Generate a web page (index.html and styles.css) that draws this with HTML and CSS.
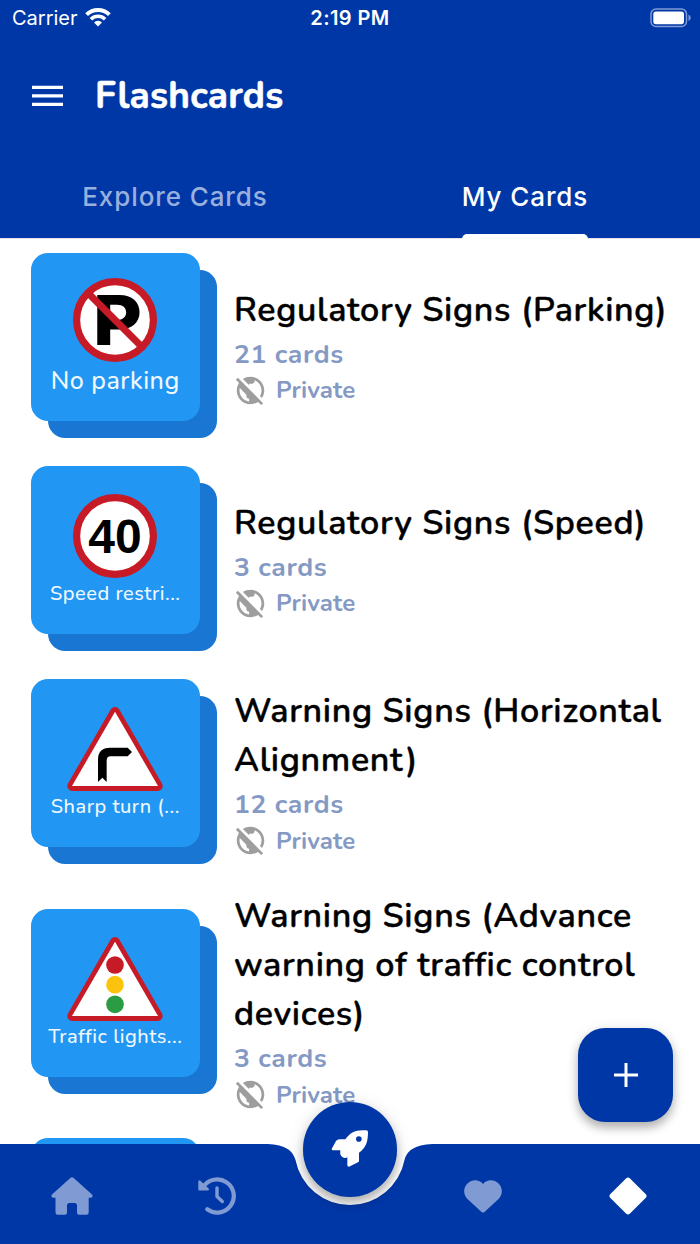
FILE: index.html
```html
<!DOCTYPE html>
<html lang="en">
<head>
  <meta charset="UTF-8" />
  <meta name="viewport" content="width=device-width, initial-scale=1.0" />
  <title>Flashcards</title>
  <link rel="stylesheet" href="styles.css">
</head>
<body>

  <header>
    <div class="status">
      <div class="carrier">
        <span>Carrier</span>
        <svg width="26" height="19" viewBox="0 0 26 19" fill="none" stroke="#fff" stroke-width="4">
          <path d="M1.6 6.7a16.2 16.2 0 0 1 22.8 0" />
          <path d="M5.9 11.2a10 10 0 0 1 14.2 0" stroke-width="3.6" />
          <path d="M13 18.5l-4-4a5.6 5.6 0 0 1 8 0z" fill="#fff" stroke="none" />
        </svg>
      </div>
      <span class="time">2:19 PM</span>
      <svg class="battery" width="42" height="20" viewBox="0 0 42 20">
        <rect x="1" y="1" width="35.5" height="17.4" rx="5" fill="none" stroke="#809bd3" stroke-width="1.5" />
        <rect x="3.3" y="3.4" width="30.7" height="12.8" rx="2.6" fill="#fff" />
        <path d="M38.5 6.5q2.2 1 2.2 3.2t-2.2 3.2z" fill="#809bd3" />
      </svg>
    </div>

    <div class="appbar">
      <svg width="31" height="22" viewBox="0 0 31 22" fill="#fff">
        <path d="M0 .7h31v3.3H0zM0 9.2h31v3.3H0zM0 17.7h31V21H0z" />
      </svg>
      <h1>Flashcards</h1>
    </div>

    <nav class="tabs">
      <div class="tab"><span>Explore Cards</span></div>
      <div class="tab active"><span>My Cards</span></div>
    </nav>
  </header>

  <main>
    <div class="deck">
      <div class="stack">
        <div class="card">
          <svg width="84" height="84" viewBox="0 0 84 84">
            <circle cx="42" cy="42" r="38.4" fill="#fff" stroke="#c61a27" stroke-width="7.2" />
            <text class="sign-p" x="20" y="66.8" textLength="49" lengthAdjust="spacingAndGlyphs">P</text>
            <path d="M16 16l52 52" stroke="#c61a27" stroke-width="7" />
          </svg>
          <span class="label big">No parking</span>
        </div>
      </div>
      <div class="info">
        <h2>Regulatory Signs (Parking)</h2>
        <p class="count">21 cards</p>
        <p class="private"><svg width="33" height="33" viewBox="0 0 24 24"><use href="#public-off" /></svg>Private</p>
      </div>
    </div>

    <div class="deck">
      <div class="stack">
        <div class="card">
          <svg width="84" height="84" viewBox="0 0 84 84">
            <circle cx="42" cy="42" r="38.4" fill="#fff" stroke="#c61a27" stroke-width="7.2" />
            <text class="sign-num" x="42" y="58.5" text-anchor="middle">40</text>
          </svg>
          <span class="label">Speed restri...</span>
        </div>
      </div>
      <div class="info">
        <h2>Regulatory Signs (Speed)</h2>
        <p class="count">3 cards</p>
        <p class="private"><svg width="33" height="33" viewBox="0 0 24 24"><use href="#public-off" /></svg>Private</p>
      </div>
    </div>

    <div class="deck">
      <div class="stack">
        <div class="card">
          <svg width="96" height="84" viewBox="141 110 288 252">
            <path d="M285 125L157 347H413z" fill="#c61a27" stroke="#c61a27" stroke-width="30" stroke-linejoin="round" />
            <path d="M285 124L156 347H414z" fill="#fff" />
            <path d="M234 335V268Q234 232 270 232H323L336 245L323 258H272Q260 258 260 271V335L247 322z" />
          </svg>
          <span class="label">Sharp turn (...</span>
        </div>
      </div>
      <div class="info">
        <h2>Warning Signs (Horizontal<br>Alignment)</h2>
        <p class="count">12 cards</p>
        <p class="private"><svg width="33" height="33" viewBox="0 0 24 24"><use href="#public-off" /></svg>Private</p>
      </div>
    </div>

    <div class="deck">
      <div class="stack">
        <div class="card">
          <svg width="96" height="84" viewBox="141 110 288 252">
            <path d="M285 125L157 347H413z" fill="#c61a27" stroke="#c61a27" stroke-width="30" stroke-linejoin="round" />
            <path d="M285 124L156 347H414z" fill="#fff" />
            <circle cx="285" cy="194" r="26.5" fill="#c61a27" />
            <circle cx="285" cy="253" r="26.5" fill="#fbc30b" />
            <circle cx="285" cy="312" r="26.5" fill="#2a9c43" />
          </svg>
          <span class="label">Traffic lights...</span>
        </div>
      </div>
      <div class="info">
        <h2>Warning Signs (Advance<br>warning of traffic control<br>devices)</h2>
        <p class="count">3 cards</p>
        <p class="private"><svg width="33" height="33" viewBox="0 0 24 24"><use href="#public-off" /></svg>Private</p>
      </div>
    </div>

    <div class="deck">
      <div class="stack"><div class="card"></div></div>
    </div>
  </main>

  <button class="fab" aria-label="Add">
    <svg width="24" height="24" viewBox="0 0 24 24" stroke="#fff" stroke-width="3"><path d="M12 0v24M0 12h24" /></svg>
  </button>

  <footer>
    <svg class="bar" width="700" height="100" viewBox="0 0 700 100">
      <path d="M0 0H264C283 0 292.5 5 295.5 16A55.5 55.5 0 0 0 404.5 16C407.5 5 417 0 436 0H700V100H0z" fill="#0037a7" />
    </svg>
    <button class="rocket" aria-label="Start">
      <svg width="40" height="40" viewBox="240 145 120 120">
        <path d="M349 152Q354 152 354 157C354 190 346 205 327 219V243Q327 246 324 248L297 261Q292 261 292 256V233Q285 238 277 232Q269 227 271 212H248Q243 211 246 206L258 184Q262 179 268 179H286C300 158 318 149 349 152z" fill="#fff" />
        <circle cx="326.5" cy="178" r="8.5" fill="#0037a7" />
      </svg>
    </button>
    <svg width="42" height="38" viewBox="0 0 42 38" fill="#809bd3">
      <path d="M19.6 .8Q21 -.4 22.4 .8L41 17.5Q42.8 20.5 39.5 20.8H37.7V35.5Q37.7 37.7 35.5 37.7H28Q26 37.7 26 35.7V28.5Q26 26 23.5 26H18.5Q16 26 16 28.5V35.7Q16 37.7 14 37.7H6.7Q4.5 37.7 4.5 35.5V20.8H2.5Q-.8 20.5 1 17.5z" />
    </svg>
    <svg width="38" height="38" viewBox="0 0 38 38" fill="none" stroke="#809bd3" stroke-width="4.2" stroke-linecap="round" stroke-linejoin="round">
      <path d="M9.3 32.3A16.6 16.6 0 1 0 5.2 10" />
      <path d="M19 11V19.5L24.3 24.5" stroke-width="3.4" />
      <path d="M1.5 4.5V12.3H9.8z" fill="#809bd3" stroke-width="2.4" />
    </svg>
    <span></span>
    <svg width="38" height="33" viewBox="0 0 38 33" fill="#809bd3">
      <path d="M19 4C23-1 30-.8 34.3 3.2C39 7.8 39 14.5 34.5 19L20.5 32Q19 33.2 17.5 32L3.5 19C-1 14.5-1 7.8 3.7 3.2C8-.8 15-1 19 4z" />
    </svg>
    <svg width="38" height="38" viewBox="0 0 38 38" fill="#fff">
      <path d="M17 1.4Q19-.6 21 1.4L36.6 17Q38.6 19 36.6 21L21 36.6Q19 38.6 17 36.6L1.4 21Q-.6 19 1.4 17z" />
    </svg>
  </footer>

  <svg width="0" height="0" class="defs">
    <symbol id="public-off" viewBox="0 0 24 24">
      <path d="M11 8.17 6.49 3.66C8.07 2.61 9.96 2 12 2c5.52 0 10 4.48 10 10 0 2.04-.61 3.93-1.66 5.51l-1.46-1.46C19.59 14.87 20 13.48 20 12c0-3.35-2.07-6.22-5-7.41V5c0 1.1-.9 2-2 2h-2v1.17zm10.19 13.02-1.41 1.41-2.27-2.27C15.93 21.39 14.04 22 12 22 6.48 22 2 17.52 2 12c0-2.04.61-3.93 1.66-5.51L1.39 4.22 2.8 2.81l18.39 18.38zM11 18c-1.1 0-2-.9-2-2v-1l-4.79-4.79C4.08 10.79 4 11.38 4 12c0 4.08 3.05 7.44 7 7.93V18z" fill="#9e9e9e" />
    </symbol>
  </svg>

</body>
</html>
```
FILE: styles.css
```css
* {
  box-sizing: border-box;
}

body {
  margin: 0;
  width: 700px;
  height: 1244px;
  position: relative;
  overflow: hidden;
  background: #fff;
  color: #000;
  font-family: "Nunito", "Open Sans", sans-serif;
}

h1, h2, p {
  margin: 0;
}

svg {
  display: block;
  flex-shrink: 0;
}

header {
  height: 239px;
  background: #0037a7;
  border-bottom: 1px solid #e6e0ee;
  color: #fff;
}

.status {
  display: grid;
  grid-template-columns: 1fr auto 1fr;
  align-items: center;
  height: 35px;
  padding: 0 8px 0 12px;
  font-family: "Inter", sans-serif;
  font-size: 20px;
}

.carrier {
  display: flex;
  align-items: center;
  gap: 7px;
}

.time {
  font-weight: 600;
  letter-spacing: 0.4px;
  margin-right: 4px;
}

.battery {
  justify-self: end;
}

.appbar {
  display: flex;
  align-items: center;
  gap: 32px;
  height: 121px;
  padding-left: 32px;
}

h1 {
  font-size: 37px;
  font-weight: 700;
  letter-spacing: 0.25px;
  -webkit-text-stroke: 0.6px #fff;
}

.tabs {
  display: flex;
  height: 82px;
  font-family: "Inter", sans-serif;
  font-size: 26px;
  font-weight: 500;
  letter-spacing: 0.9px;
}

.tab {
  flex: 1;
  display: flex;
  justify-content: center;
  color: #99afdc;
}

.tab span {
  height: 83px;
  line-height: 82px;
}

.tab.active {
  color: #fff;
}

.active span {
  position: relative;
}

.active span::after {
  content: "";
  position: absolute;
  left: 0;
  right: 0;
  bottom: 0;
  height: 5px;
  border-radius: 5px 5px 0 0;
  background: #fff;
}

main {
  height: 1005px;
  overflow: hidden;
}

.deck {
  display: flex;
  align-items: center;
  gap: 17.5px;
  padding: 13.75px 0 13.75px 31px;
}

.stack {
  position: relative;
  flex-shrink: 0;
  width: 185.5px;
  height: 185.5px;
}

.stack::before {
  content: "";
  position: absolute;
  right: 0;
  bottom: 0;
  width: 168.5px;
  height: 168.5px;
  border-radius: 17px;
  background: #1976d2;
}

.card {
  position: relative;
  display: flex;
  flex-direction: column;
  align-items: center;
  justify-content: center;
  width: 168.5px;
  height: 168.5px;
  border-radius: 17px;
  background: #2196f3;
}

.label {
  padding-top: 3px;
  line-height: 25px;
  font-size: 20px;
  font-weight: 500;
  letter-spacing: 0.5px;
  white-space: nowrap;
  color: #f0f8ff;
}

.label.big {
  line-height: 32px;
  font-size: 25px;
}

.sign-p {
  font-family: "Inter", sans-serif;
  font-size: 69px;
  font-weight: 800;
}

.sign-num {
  font-family: "Liberation Sans", sans-serif;
  font-size: 48px;
  font-weight: 700;
}

.info {
  margin: 0.5px 0 -0.5px;
}

h2 {
  line-height: 49px;
  font-size: 34px;
  font-weight: 600;
  letter-spacing: 0.67px;
  white-space: nowrap;
  -webkit-text-stroke: 0.4px #000;
}

.count {
  padding-top: 1px;
  line-height: 37px;
  font-size: 26.5px;
  font-weight: 700;
  letter-spacing: 0.6px;
  color: #8499c4;
}

.private {
  display: flex;
  align-items: center;
  gap: 9px;
  height: 34px;
  padding-top: 1px;
  font-size: 24px;
  font-weight: 700;
  letter-spacing: 0.1px;
  color: #8499c4;
}

.fab {
  position: absolute;
  left: 578.4px;
  top: 1027.5px;
  display: flex;
  align-items: center;
  justify-content: center;
  width: 94.5px;
  height: 94.5px;
  padding: 0;
  border: none;
  border-radius: 27px;
  background: #0037a7;
  box-shadow: 0 6px 10px rgba(0, 0, 0, 0.25), 0 2px 14px rgba(0, 0, 0, 0.1);
}

footer {
  position: absolute;
  left: 0;
  bottom: 0;
  display: grid;
  grid-template-columns: 144.5px 144.5px 122px 144.5px 144.5px;
  align-items: center;
  justify-items: center;
  width: 700px;
  height: 100px;
  padding-top: 4px;
}

footer > svg {
  position: relative;
}

footer .bar {
  position: absolute;
  left: 0;
  top: 0;
}

.rocket {
  position: absolute;
  left: 302.75px;
  top: -42px;
  display: flex;
  align-items: center;
  justify-content: center;
  width: 94.5px;
  height: 94.5px;
  padding: 0 0 3px;
  border: none;
  border-radius: 50%;
  background: #0037a7;
  box-shadow: 0 6px 10px rgba(0, 0, 0, 0.25), 0 2px 18px rgba(0, 0, 0, 0.12);
}

.defs {
  position: absolute;
}
```
